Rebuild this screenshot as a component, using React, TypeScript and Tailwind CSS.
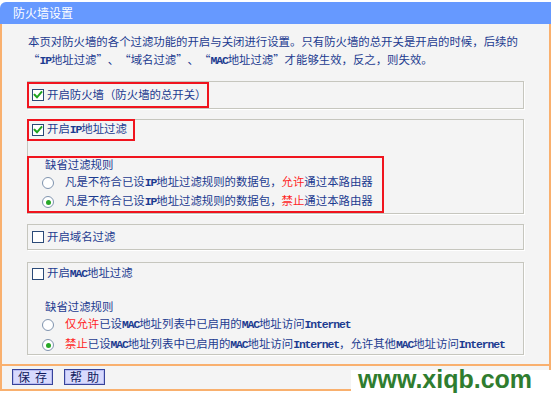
import React from "react";

const L = ({ children }: { children: React.ReactNode }) => (
  <span className="font-['Liberation_Mono'] font-bold tracking-[-1.1px]">{children}</span>
);

const R = ({ children }: { children: React.ReactNode }) => (
  <span className="text-[#ff1f1f]">{children}</span>
);

const QO = () => <span className="inline-block w-[11.4px] text-right">“</span>;
const QC = () => <span className="inline-block w-[11.4px] text-left">”</span>;

const Check = ({ checked }: { checked?: boolean }) => (
  <div className="w-[12px] h-[12px] border border-[#2b4a78] bg-white flex items-center justify-center shrink-0">
    {checked && (
      <svg width="10" height="10" viewBox="0 0 10 10">
        <path d="M1.6 4.8 L4 7.3 L8.4 2.2" fill="none" stroke="#1fa31f" strokeWidth="2" strokeLinecap="square" />
      </svg>
    )}
  </div>
);

const Radio = ({ checked }: { checked?: boolean }) => (
  <div className="w-[12px] h-[12px] rounded-full border border-[#7f93ae] bg-white flex items-center justify-center shrink-0">
    {checked && <div className="w-[5px] h-[5px] rounded-full bg-[#27a827]" />}
  </div>
);

const Box = ({ className, children }: { className?: string; children: React.ReactNode }) => (
  <div className={"border border-[#c6c6be] shadow-[1px_1px_0_#ffffff] " + (className ?? "")}>{children}</div>
);

const Btn = ({ a, b }: { a: string; b: string }) => (
  <div className="w-[41px] h-[16px] bg-[#d8dafd] border border-[#37439a] shadow-[inset_0_0_0_1px_#b9bdf2] flex items-center justify-center gap-[5px] text-[12px] leading-[14px] text-[#101a5e]">
    <span>{a}</span>
    <span>{b}</span>
  </div>
);

export default function App() {
  return (
    <div
      lang="zh-CN"
      className="w-[553px] h-[393px] bg-white relative overflow-hidden font-['Noto_Sans_CJK_SC',sans-serif] text-[11.4px] text-[#1c3b90]"
    >
      <div className="pt-[2px] w-[551px]">
        <div className="h-[22px] bg-[#6699ff] rounded-tl-[6px] pl-[13px] text-white text-[12px] leading-[22px]">
          防火墙设置
        </div>
        <div className="border-x-2 border-b-2 border-[#f9b06e] bg-[#f4f4f4] px-[25px] pb-[9px] flex flex-col">
          <div className="pt-[8px] pl-px leading-[18px] whitespace-nowrap">
            本页对防火墙的各个过滤功能的开启与关闭进行设置。只有防火墙的总开关是开启的时候，后续的
            <br />
            <QO />
            <L>IP</L>地址过滤<QC />、<QO />域名过滤<QC />、<QO />
            <L>MAC</L>地址过滤<QC />才能够生效，反之，则失效。
          </div>

          <Box className="mt-[11px]">
            <div className="-ml-px w-[182px] h-[26px] border-2 border-[#f0141e] flex items-center pl-[3px] whitespace-nowrap">
              <Check checked />
              <span className="ml-[3px]">开启防火墙（防火墙的总开关）</span>
            </div>
          </Box>

          <Box className="mt-[10px]">
            <div className="-mt-px -ml-px w-[108px] h-[22px] border-2 border-[#f0141e] flex items-center pl-[3px] whitespace-nowrap">
              <Check checked />
              <span className="ml-[3px]">
                开启<L>IP</L>地址过滤
              </span>
            </div>
            <div className="mt-[15px] -ml-px w-[357px] border-2 border-[#f0141e] flex flex-col whitespace-nowrap">
              <div className="h-[12px] leading-[12px] pl-[16px]">缺省过滤规则</div>
              <div className="mt-[4px] h-[18px] flex items-center pl-[13px]">
                <Radio />
                <span className="ml-[11px]">
                  凡是不符合已设<L>IP</L>地址过滤规则的数据包，<R>允许</R>通过本路由器
                </span>
              </div>
              <div className="mt-px h-[18px] flex items-center pl-[13px]">
                <Radio checked />
                <span className="ml-[11px]">
                  凡是不符合已设<L>IP</L>地址过滤规则的数据包，<R>禁止</R>通过本路由器
                </span>
              </div>
            </div>
          </Box>

          <Box className="mt-[10px]">
            <div className="h-[24px] flex items-center pl-[4px] whitespace-nowrap">
              <Check />
              <span className="ml-[3px]">开启域名过滤</span>
            </div>
          </Box>

          <Box className="mt-[12px]">
            <div className="h-[22px] flex items-center pl-[4px] whitespace-nowrap">
              <Check />
              <span className="ml-[3px]">
                开启<L>MAC</L>地址过滤
              </span>
            </div>
            <div className="mt-[15px] h-[12px] leading-[12px] pl-[17px]">缺省过滤规则</div>
            <div className="mt-[4px] h-[18px] flex items-center pl-[14px] whitespace-nowrap">
              <Radio />
              <span className="ml-[11px]">
                <R>仅允许</R>已设<L>MAC</L>地址列表中已启用的<L>MAC</L>地址访问<L>Internet</L>
              </span>
            </div>
            <div className="mt-[2px] h-[18px] flex items-center pl-[14px] whitespace-nowrap">
              <Radio checked />
              <span className="ml-[11px]">
                <R>禁止</R>已设<L>MAC</L>地址列表中已启用的<L>MAC</L>地址访问<L>Internet</L>，允许其他<L>MAC</L>地址访问<L>Internet</L>
              </span>
            </div>
          </Box>
        </div>
        <div className="h-[25px] border-x-2 border-b-2 border-[#f9b06e] bg-[#f4f4f4] flex items-start pt-[3px] pl-[10px] gap-[11px]">
          <Btn a="保" b="存" />
          <Btn a="帮" b="助" />
        </div>
      </div>

      <div className="absolute left-[351px] top-[370px] w-[202px] h-[23px] bg-white pl-[7px] pt-[1px]">
        <span className="block font-['Liberation_Sans',sans-serif] font-bold text-[25px] leading-[17px] text-[#2f7d2f] whitespace-nowrap">
          www.xiqb.com
        </span>
      </div>
    </div>
  );
}
